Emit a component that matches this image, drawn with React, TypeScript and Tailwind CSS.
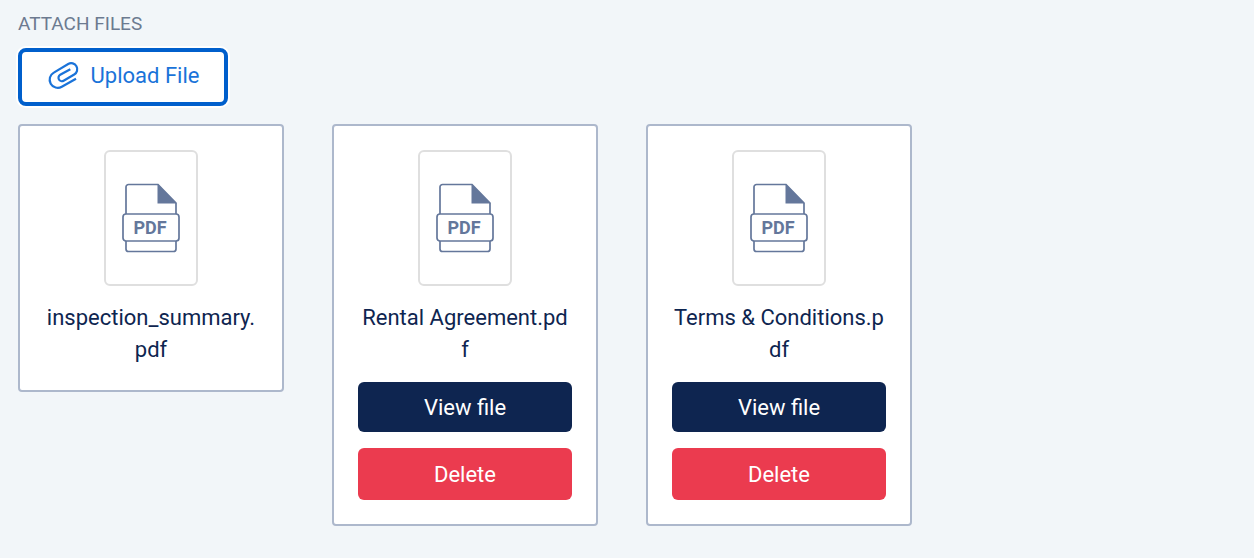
interface AttachedFile {
  id: string;
  name: string;
  editable: boolean;
}

const files: AttachedFile[] = [
  { id: 'inspection', name: 'inspection_summary.pdf', editable: false },
  { id: 'rental', name: 'Rental Agreement.pdf', editable: true },
  { id: 'terms', name: 'Terms & Conditions.pdf', editable: true },
];

function PaperclipIcon() {
  return (
    <svg width="32" height="30" viewBox="0 0 32 30" fill="none" aria-hidden="true">
      <path
        d="M23.300 9.200 13.200 14.800A3.400 3.400 0 0 0 16.600 20.700L27.200 14.500A6 6 0 0 0 21.200 4L6.800 12.600A8 8 0 0 0 14.800 26.800L29 18.800"
        stroke="#1a73d9"
        strokeWidth="2.2"
      />
    </svg>
  );
}

function PdfIcon() {
  return (
    <svg width="60" height="70" viewBox="0 0 60 70" fill="none" aria-hidden="true">
      <path
        d="M5 31V4a2.500 2.500 0 0 1 2.500-2.500H37L55 20v11M5 58v8a2.500 2.500 0 0 0 2.500 2.500h45A2.500 2.500 0 0 0 55 66v-8"
        stroke="#64779b"
        strokeWidth="1.7"
      />
      <path d="M36.500 1v19.500H55.500z" fill="#64779b" />
      <rect x="2" y="31" width="56" height="27" rx="3" stroke="#64779b" strokeWidth="1.7" />
      <text
        x="29"
        y="51"
        textAnchor="middle"
        className="fill-[#64779b] font-['Roboto',sans-serif] text-lg font-bold"
      >
        PDF
      </text>
    </svg>
  );
}

function FileCard({ file }: { file: AttachedFile }) {
  return (
    <li className="flex w-[266px] flex-col gap-4 rounded-sm border-2 border-[#adb8cc] bg-white p-6">
      <div className="flex h-[136px] w-[94px] items-center justify-center self-center rounded-md border-2 border-[#dfdfdf]">
        <PdfIcon />
      </div>
      <p className="px-px text-center text-[22px] leading-8 break-all text-[#0e2550]">{file.name}</p>
      {file.editable && (
        <>
          <button type="button" className="h-[50px] rounded-md bg-[#0e2550] text-[22px] text-white">
            View file
          </button>
          <button type="button" className="h-[52px] rounded-md bg-[#eb3b4f] text-[22px] text-white">
            Delete
          </button>
        </>
      )}
    </li>
  );
}

export default function App() {
  return (
    <main className="min-h-screen bg-[#f2f6f9] px-[18px] pt-3 pb-8 font-['Roboto',sans-serif]">
      <h2 className="text-[19px] leading-6 text-[#6c7a90]">ATTACH FILES</h2>
      <button
        type="button"
        className="mt-3 flex h-[58px] w-[210px] items-center justify-center gap-3 rounded-lg border-4 border-[#005fcc] bg-white pb-1 text-[22px] text-[#1a73d9] ring-2 ring-white"
      >
        <PaperclipIcon />
        Upload File
      </button>
      <ul className="mt-[18px] flex flex-wrap items-start gap-12">
        {files.map((file) => (
          <FileCard key={file.id} file={file} />
        ))}
      </ul>
    </main>
  );
}
